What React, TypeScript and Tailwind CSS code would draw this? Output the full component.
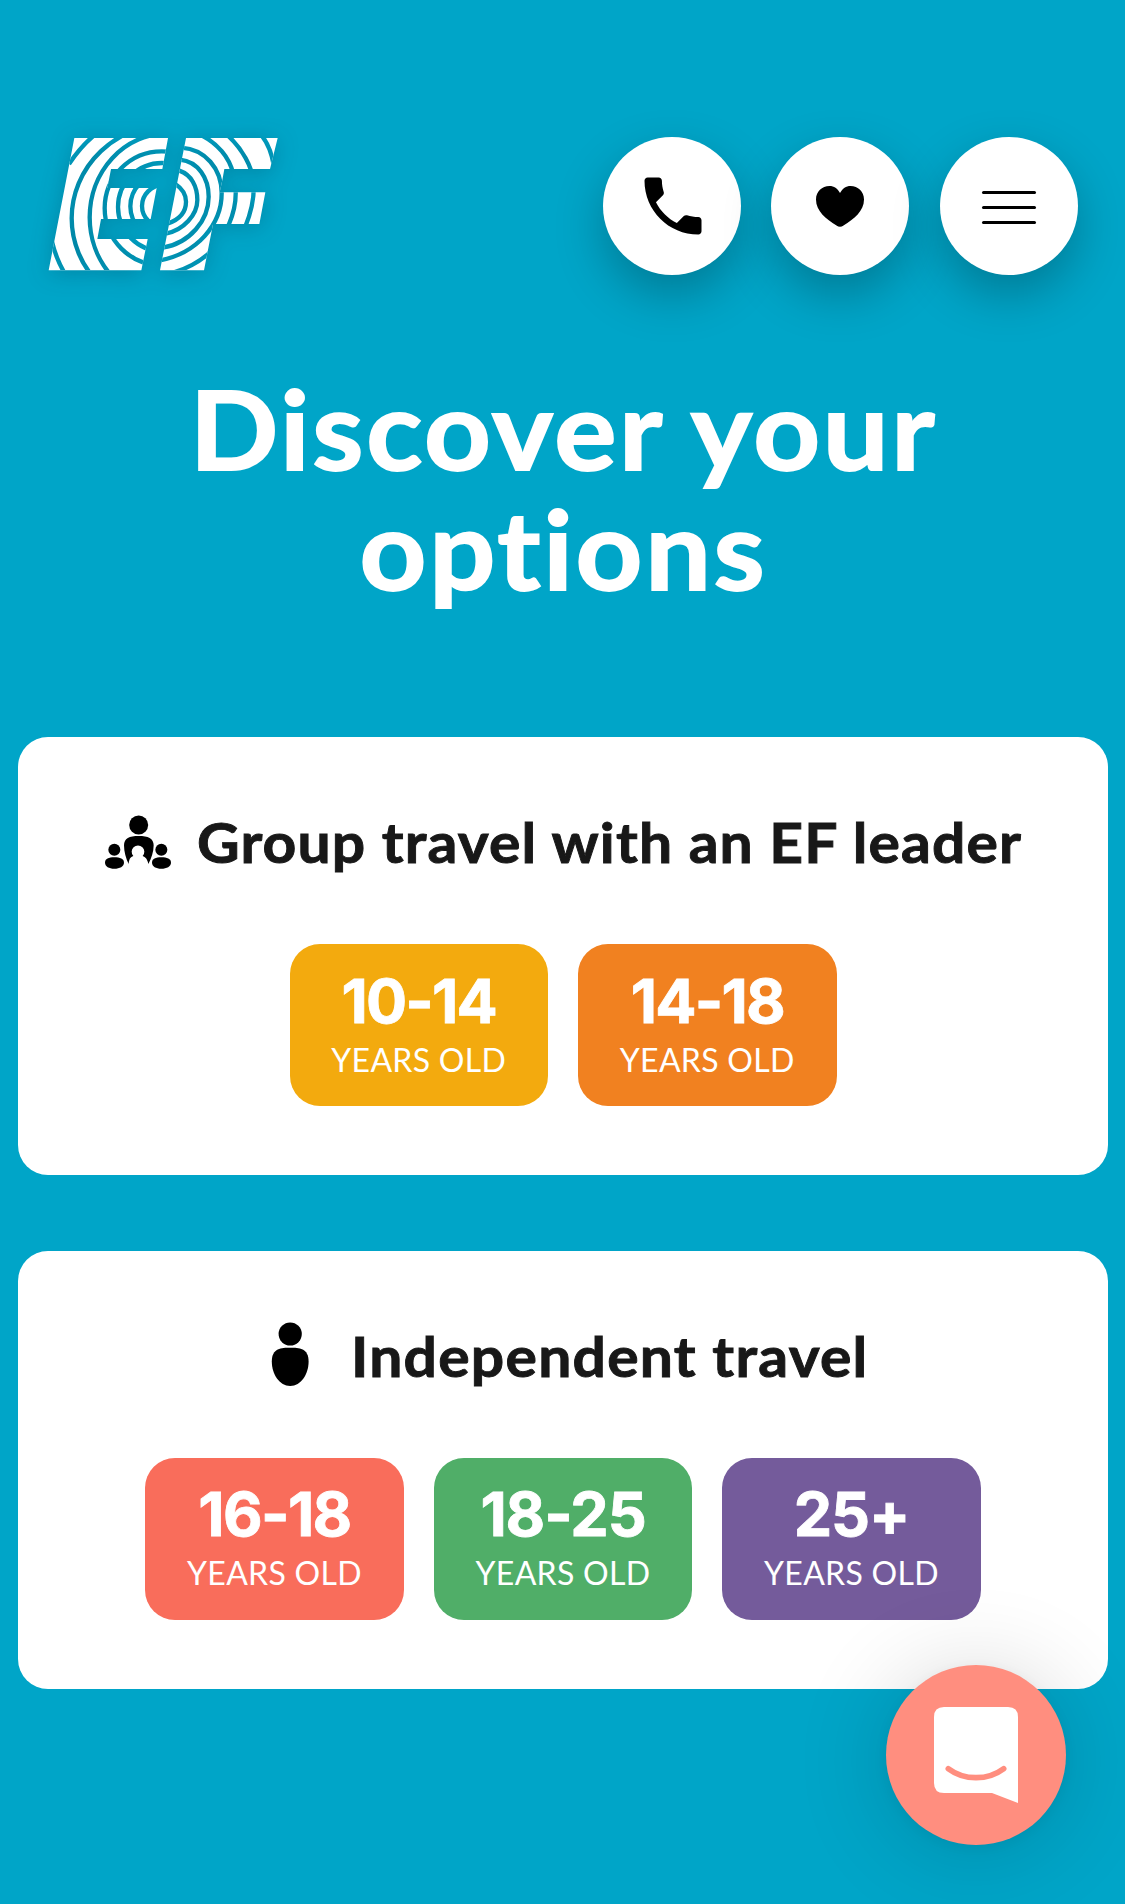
import type { ReactNode } from "react";

function EfLogo() {
  return (
    <svg
      viewBox="54 51 692 402"
      className="h-[134px] w-[230.7px] overflow-visible [filter:drop-shadow(0_3px_11px_rgba(0,40,60,0.3))]"
      role="img"
      aria-label="EF"
    >
      <mask id="rings" maskUnits="userSpaceOnUse" x="0" y="0" width="810" height="510">
        <g fill="none" stroke="black" strokeWidth="13">
          <rect x="0" y="0" width="810" height="510" fill="white" stroke="none" />
          <g clipPath="url(#letter-e)">
            <path d="M190 48Q150 82 117 132" />
            <path d="M66 365Q78 415 104 460" />
            <ellipse cx="425" cy="295" rx="300" ry="285" />
            <ellipse cx="410" cy="292" rx="231" ry="251" />
            <circle cx="395" cy="265" r="171" />
            <circle cx="396" cy="261" r="132" />
            <circle cx="397" cy="259" r="96" />
            <circle cx="398" cy="258" r="62" />
          </g>
          <g clipPath="url(#letter-f)">
            <path d="M436 192C460 208 468 225 468 245C468 275 450 298 412 311" />
            <path d="M448 152C485 165 502 200 502 240C502 285 460 330 410 340" />
            <path d="M450 119C505 125 536 175 536 230C536 300 480 370 398 383" />
            <path d="M454 83C525 88 575 145 575 220C575 315 500 400 390 421" />
            <path d="M518 48C560 70 598 110 609 160C620 200 624 250 597 312C572 375 520 430 430 458" />
            <path d="M595 48C640 90 664 140 670 180C675 225 664 275 646 320" />
            <path d="M694 46C715 70 724 95 731 135" />
          </g>
        </g>
      </mask>
      <clipPath id="letter-e">
        <path d="M133 54H414L397 147H243L232 204H380L362 297H213L202 357H353L334 451H56Z" />
      </clipPath>
      <clipPath id="letter-f">
        <path d="M468 54H743L720 147H583L577 180L569 217H706L688 312H549L522 451H390Z" />
      </clipPath>
      <g fill="white" mask="url(#rings)">
        <path d="M133 54H414L397 147H243L232 204H380L362 297H213L202 357H353L334 451H56Z" />
        <path d="M468 54H743L720 147H583L577 180L569 217H706L688 312H549L522 451H390Z" />
      </g>
    </svg>
  );
}

function GroupIcon() {
  return (
    <svg viewBox="75 54 198 204" className="h-[68px] w-[66px] shrink-0">
      <circle cx="176" cy="105" r="28.5" />
      <path d="M132 166C132 145 148 138 176 138S221 145 221 166C221 186 214 206 205 222C203 208 196 201 188 198A19 19 0 1 0 160 198C151 201 147 208 146 222C138 206 132 186 132 166Z" />
      <circle cx="103" cy="179" r="18" />
      <circle cx="244" cy="179" r="18" />
      <path d="M75 218C75 206 86 202 103 202S132 206 132 218C132 229 119 236 103 236S75 229 75 218Z" />
      <path d="M216 218C216 206 227 202 244 202S273 206 273 218C273 229 260 236 244 236S216 229 216 218Z" />
    </svg>
  );
}

function PersonIcon() {
  return (
    <svg viewBox="257 1322 66 68" className="h-[68px] w-[66px] shrink-0">
      <circle cx="290.2" cy="1334" r="11.6" />
      <path d="M290.2 1347.7C299 1347.7 308.6 1348 308.6 1361.5C308.6 1374 301 1386 290.2 1386S271.8 1374 271.8 1361.5C271.8 1348 281.5 1347.7 290.2 1347.7Z" />
    </svg>
  );
}

function RoundButton({ label, children }: { label: string; children: ReactNode }) {
  return (
    <button
      aria-label={label}
      className="flex size-[138px] items-center justify-center rounded-full bg-white shadow-[0_20px_48px_rgba(0,0,0,0.25)]"
    >
      {children}
    </button>
  );
}

function AgeButton({ ages, className, textClass = "" }: { ages: string; className: string; textClass?: string }) {
  return (
    <button
      className={`flex h-[162.3px] w-[258.5px] flex-col items-center rounded-[30px] pt-[26.5px] text-white ${className}`}
    >
      <span
        className={`font-['Inter',sans-serif] text-[61px] leading-[60px] font-bold [-webkit-text-stroke:0.8px_white] [font-feature-settings:'calt'_0] ${textClass}`}
      >
        {ages}
      </span>
      <span className="mt-[13px] text-[32px] leading-[31px] tracking-[0.3px]">YEARS OLD</span>
    </button>
  );
}

function Card({ icon, title, titleClass, children }: { icon: ReactNode; title: string; titleClass: string; children: ReactNode }) {
  return (
    <section className="h-[438.3px] rounded-[30px] bg-white pt-[71px]">
      <div className="flex items-center justify-center">
        {icon}
        <h2
          className={`origin-left scale-x-[1.06] text-[55.5px] leading-[68px] font-bold whitespace-nowrap text-[#181818] [-webkit-text-stroke:0.9px_#181818] ${titleClass}`}
        >
          {title}
        </h2>
      </div>
      <div className="mt-[68px] flex justify-center gap-[30px]">{children}</div>
    </section>
  );
}

export default function App() {
  return (
    <div className="h-[1904px] w-[1125px] overflow-hidden bg-[#00a5c8] font-['Lato',sans-serif]">
      <header className="flex justify-between pt-[137px] pr-[47px] pl-[48px]">
        <EfLogo />
        <div className="flex gap-[30.7px]">
          <RoundButton label="Call">
            <svg viewBox="0 0 24 24" className="ml-[2px] size-[76px]">
              <path d="M6.62 10.79c1.44 2.83 3.76 5.14 6.59 6.59l2.2-2.2c.27-.27.67-.36 1.02-.24 1.12.37 2.33.57 3.57.57.55 0 1 .45 1 1V20c0 .55-.45 1-1 1-9.39 0-17-7.61-17-17 0-.55.45-1 1-1h3.5c.55 0 1 .45 1 1 0 1.25.2 2.45.57 3.57.11.35.03.74-.25 1.02l-2.2 2.2z" />
            </svg>
          </RoundButton>
          <RoundButton label="Favourites">
            <svg viewBox="0 0 48 41" className="h-[41px] w-[48px]">
              <path d="M24 7C21.5 2.5 18 0 13.5 0C6 0 0 5.5 0 13.5C0 25 10 33 20.500 39.500C22.700 41.300 25.300 41.300 27.500 39.500C38 33 48 25 48 13.500C48 5.500 42 0 34.500 0C30 0 26.500 2.500 24 7Z" />
            </svg>
          </RoundButton>
          <RoundButton label="Menu">
            <span className="mt-[3px] flex w-[54px] flex-col gap-[12px]">
              <span className="h-[3px] rounded-full bg-black" />
              <span className="h-[3px] rounded-full bg-black" />
              <span className="h-[3px] rounded-full bg-black" />
            </span>
          </RoundButton>
        </div>
      </header>

      <h1 className="mt-[92px] pl-[2px] scale-x-[1.06] text-center text-[110px] leading-[120px] font-bold tracking-[2.5px] text-white [-webkit-text-stroke:1.8px_white]">
        <span className="block">Discover your</span>
        <span className="block">options</span>
      </h1>

      <main className="mt-[130px] flex flex-col gap-[75.7px] pr-[17px] pl-[18px]">
        <Card icon={<GroupIcon />} title="Group travel with an EF leader" titleClass="ml-[26px] mr-[46px] tracking-[1.060px]">
          <AgeButton ages="10-14" className="bg-[#f3aa0e]" textClass="tracking-[-1.8px]" />
          <AgeButton ages="14-18" className="bg-[#f18120]" textClass="tracking-[-1.8px]" />
        </Card>
        <Card icon={<PersonIcon />} title="Independent travel" titleClass="ml-[28px] mr-[29px] tracking-[1.150px]">
          <AgeButton ages="16-18" className="bg-[#f96d5b]" textClass="tracking-[-1.6px]" />
          <AgeButton ages="18-25" className="bg-[#50ae68]" textClass="tracking-[-1.1px]" />
          <AgeButton ages="25+" className="bg-[#745b9b]" textClass="tracking-[-1.1px]" />
        </Card>
      </main>

      <button
        aria-label="Open chat"
        className="fixed top-[1665px] left-[886px] flex size-[180px] items-center justify-center rounded-full bg-[#ff8e7f] shadow-[0_3px_18px_rgba(0,0,0,0.06),0_6px_96px_rgba(0,0,0,0.16)]"
      >
        <svg viewBox="702 801 252 288" className="h-[96px] w-[84px]">
          <path d="M732 801H924Q954 801 954 831V1089L876 1059H732Q702 1059 702 1029V831Q702 801 732 801Z" fill="white" />
          <path d="M745 986C793 1022 863 1022 911 986" fill="none" stroke="#ff8e7f" strokeWidth="17" strokeLinecap="round" />
        </svg>
      </button>
    </div>
  );
}
